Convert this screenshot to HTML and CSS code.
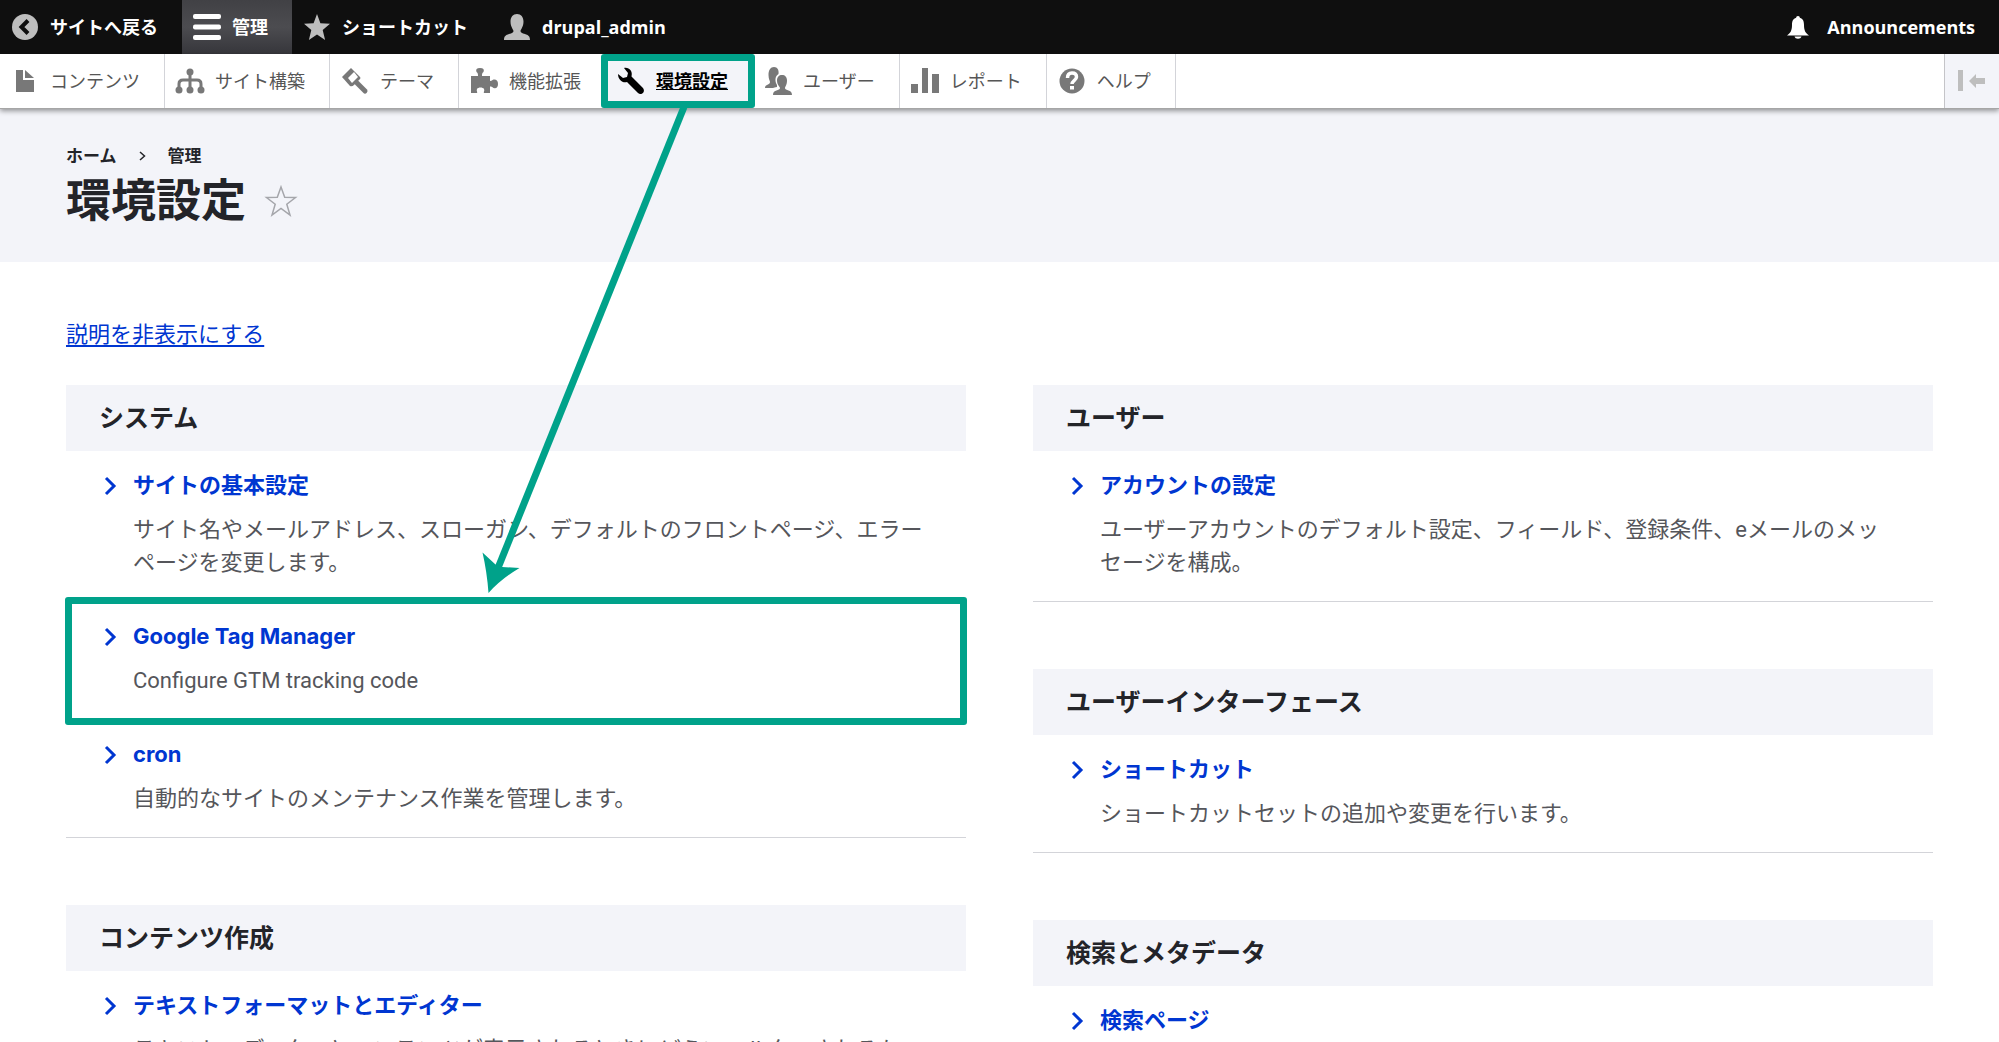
FILE: index.html
```html
<!DOCTYPE html>
<html lang="ja">
<head>
<meta charset="utf-8">
<meta name="viewport" content="width=device-width, initial-scale=1">
<title>環境設定 | Drupal</title>
<link rel="stylesheet" href="styles.css">
</head>
<body>
<nav class="toolbar-bar" aria-label="ツールバー">
  <a class="bar-item" href="#"><svg class="icon" viewBox="0 0 26 26"><circle cx="13" cy="13" r="13" fill="#bebebe"/><path d="M16 6.500l-6.500 6.500 6.500 6.500" fill="none" stroke="#0f0f0f" stroke-width="4"/></svg>サイトへ戻る</a>
  <a class="bar-item bar-item-active" href="#"><svg class="icon" viewBox="0 0 26 26" fill="#fff"><rect x="-1" y="0" width="28" height="5" rx="2"/><rect x="-1" y="10.500" width="28" height="5" rx="2"/><rect x="-1" y="21" width="28" height="5" rx="2"/></svg>管理</a>
  <a class="bar-item" href="#"><svg class="icon" viewBox="0 0 26 26" fill="#bebebe"><path d="M13 0l3.400 9.200 9.600.6-7.300 6.200 2.400 10L13 20.400 4.900 26l2.400-10L0 9.800l9.600-.6z"/></svg>ショートカット</a>
  <a class="bar-item" href="#"><svg class="icon" viewBox="0 0 26 26" fill="#bebebe"><path d="M0 26c0-4 2-5 5-6 3-.8 4.500-1.500 4.500-3 0-1.200-3-4-3-9.500C6.500 3 9 0 13 0s6.500 3 6.500 7.500c0 5.500-3 8.300-3 9.500 0 1.500 1.500 2.200 4.500 3 3 1 5 2 5 6z"/></svg>drupal_admin</a>
  <a class="bar-item bar-item-end" href="#"><svg class="icon" viewBox="0 0 26 26" fill="#fff"><path d="M13 2c1.200 0 1.800.8 1.800 1.700 3.200.9 4.200 3.600 4.200 7.300 0 5.500 1.500 8 5 10.500H2C5.500 19 7 16.500 7 11c0-3.700 1-6.400 4.200-7.300C11.200 2.800 11.800 2 13 2zM9.500 22.500h7c-.5 1.500-1.800 2.200-3.500 2.200s-3-.7-3.500-2.200z"/></svg>Announcements</a>
</nav>
<nav class="tray" aria-label="管理メニュー">
  <a class="tray-item" href="#"><svg class="icon" viewBox="0 0 26 26" fill="#787878"><path d="M4 2h7v10h11v12H4zM13 2l9 8h-9z"/></svg>コンテンツ</a>
  <a class="tray-item" href="#"><svg class="icon" viewBox="0 0 26 26" fill="#787878"><circle cx="13" cy="4" r="3.500"/><circle cx="2" cy="22" r="3.500"/><circle cx="13" cy="22" r="3.500"/><circle cx="24" cy="22" r="3.500"/><path d="M13 5v16M2 21v-5q0-4 4-4h14q4 0 4 4v5" fill="none" stroke="#787878" stroke-width="3"/></svg>サイト構築</a>
  <a class="tray-item" href="#"><svg class="icon" viewBox="0 0 26 26"><path d="M9 0L0 9l8 9q2 1 4-1l6-6q1-1 0-2z" fill="#787878"/><path d="M12 4l-6 6 4 5 6-6z" fill="#fff"/><path d="M15 15l8 8" stroke="#787878" stroke-width="5" stroke-linecap="round"/></svg>テーマ</a>
  <a class="tray-item" href="#"><svg class="icon" viewBox="0 0 26 26" fill="#787878"><path d="M0 8h7c0-2 0-3-1.500-4Q4 0 9 0t3.500 4C11 5 11 6 11 8h8v5c2 0 2-1 3.500-1.500Q27 11 27 16t-4.500 4C21 19 21 18.500 19 18.500V25h-6c-1-1 1-2 0-4-1-2-6-2-7 0-1 2 1 3 0 4H0z"/></svg>機能拡張</a>
  <a class="tray-item tray-item-active" href="#"><svg class="icon" viewBox="0 0 26 26"><path d="M6 0c5-1 9 3 7.500 8.500L25 20c3 4-2 8-5 5L9 14C5 15.500 0 12 0 6l5 4 4-1 1-4z" fill="#000"/></svg>環境設定</a>
  <a class="tray-item" href="#"><svg class="icon" viewBox="0 0 26 26" fill="#787878"><path d="M0 20c0-4 5-3 5-6 0-1-1.500-3-1.500-7C3.500 2 5.500-1 9-1s5 3 4.500 7C10 8 9.500 13 12 17v2c-2 .5-3 .5-4 1z"/><path d="M8 27c0-6 7-4 7-7 0-1-3-3-3-7.500C12 9 14 7 17 7s5 2 5 5.500c0 4.500-2 6.500-2 7.500 0 3 7 1 7 7z"/></svg>ユーザー</a>
  <a class="tray-item" href="#"><svg class="icon" viewBox="0 0 26 26" fill="#787878"><path d="M-1 16h7v9h-7zM10 0h6v25h-6zM20 6h7v19h-7z"/></svg>レポート</a>
  <a class="tray-item" href="#"><svg class="icon" viewBox="0 0 26 26"><circle cx="13" cy="13" r="12.500" fill="#787878"/><path d="M8.500 10q0-5 4.500-5t4.500 4c0 3-4.500 4-4.500 7" fill="none" stroke="#fff" stroke-width="3.500"/><path d="M11 18h4v3.500h-4z" fill="#fff"/></svg>ヘルプ</a>
  <button class="tray-toggle" type="button" aria-label="縦向き"><svg width="28" height="22" viewBox="0 0 28 22" fill="#bebebe"><path d="M0 0h5v21H0zM11 11l7-7v4h9v6h-9v4z"/></svg></button>
</nav>
<header class="page-header">
  <nav class="breadcrumb" aria-label="パンくず">
    <a href="#">ホーム</a>
    <svg width="7" height="10" viewBox="0 0 7 10"><path d="M1 1l4.500 4L1 9" fill="none" stroke="#232429" stroke-width="1.500"/></svg>
    <a href="#">管理</a>
  </nav>
  <div class="title-row">
    <h1>環境設定</h1>
    <button class="star" type="button" aria-label="ショートカットに追加"><svg width="34" height="34" viewBox="0 0 34 34"><path d="M17 3l3.700 10.300L31.500 13.500l-8.700 6.700L26 31l-9-6.500L8 31l3.200-10.800-8.700-6.700 10.800-.2z" fill="none" stroke="#a5a6ab" stroke-width="1.500"/></svg></button>
  </div>
</header>
<main class="content">
  <a class="compact-link" href="#">説明を非表示にする</a>
  <div class="columns">
    <div class="column">
      <section class="panel">
        <h2>システム</h2>
        <dl>
          <div class="entry"><dt><svg class="chevron" viewBox="0 0 12 20"><path d="M2 2l8 8-8 8"/></svg><a href="#">サイトの基本設定</a></dt><dd>サイト名やメールアドレス、スローガン、デフォルトのフロントページ、エラーページを変更します。</dd></div>
          <div class="entry entry-marked"><dt><svg class="chevron" viewBox="0 0 12 20"><path d="M2 2l8 8-8 8"/></svg><a href="#">Google Tag Manager</a></dt><dd>Configure GTM tracking code</dd></div>
          <div class="entry"><dt><svg class="chevron" viewBox="0 0 12 20"><path d="M2 2l8 8-8 8"/></svg><a href="#">cron</a></dt><dd>自動的なサイトのメンテナンス作業を管理します。</dd></div>
        </dl>
      </section>
      <section class="panel">
        <h2>コンテンツ作成</h2>
        <dl>
          <div class="entry"><dt><svg class="chevron" viewBox="0 0 12 20"><path d="M2 2l8 8-8 8"/></svg><a href="#">テキストフォーマットとエディター</a></dt><dd>テキストエディターとコンテンツが表示されるときにどうフィルターされるか、設定します。</dd></div>
        </dl>
      </section>
    </div>
    <div class="column">
      <section class="panel">
        <h2>ユーザー</h2>
        <dl>
          <div class="entry"><dt><svg class="chevron" viewBox="0 0 12 20"><path d="M2 2l8 8-8 8"/></svg><a href="#">アカウントの設定</a></dt><dd>ユーザーアカウントのデフォルト設定、フィールド、登録条件、eメールのメッセージを構成。</dd></div>
        </dl>
      </section>
      <section class="panel">
        <h2>ユーザーインターフェース</h2>
        <dl>
          <div class="entry"><dt><svg class="chevron" viewBox="0 0 12 20"><path d="M2 2l8 8-8 8"/></svg><a href="#">ショートカット</a></dt><dd>ショートカットセットの追加や変更を行います。</dd></div>
        </dl>
      </section>
      <section class="panel">
        <h2>検索とメタデータ</h2>
        <dl>
          <div class="entry"><dt><svg class="chevron" viewBox="0 0 12 20"><path d="M2 2l8 8-8 8"/></svg><a href="#">検索ページ</a></dt></div>
        </dl>
      </section>
    </div>
  </div>
</main>
<svg class="callout-arrow" width="720" height="600" viewBox="0 0 720 600" aria-hidden="true"><path d="M684 107L498 568" stroke="#00a28a" stroke-width="7"/><path d="M488.500 593Q487 572 482.500 552.500L495.500 564.500 502 567 519.500 568Q501 579 488.500 593z" fill="#00a28a"/></svg>
</body>
</html>
```
FILE: styles.css
```css
* {
  box-sizing: border-box;
}

body {
  position: relative;
  margin: 0;
  background: #fff;
  color: #232429;
  font-family: Inter, "Noto Sans CJK JP", sans-serif;
  font-size: 22px;
  line-height: 33px;
}

a {
  color: #0036d1;
}

button {
  padding: 0;
  border: 0;
  background: none;
}

svg {
  display: block;
  overflow: visible;
}

/* Toolbar */
.toolbar-bar,
.tray {
  display: flex;
  font-family: "Open Sans", "Noto Sans CJK JP", sans-serif;
  font-size: 18px;
}

.toolbar-bar {
  height: 54px;
  background: #0f0f0f;
}

.bar-item,
.tray-item {
  display: flex;
  align-items: center;
  gap: 12px;
  padding: 0 24px 0 12px;
  white-space: nowrap;
  text-decoration: none;
}

.bar-item {
  color: #fff;
  font-weight: 700;
}

.bar-item-active {
  background: linear-gradient(#414145, #4c4c50 50%, #36363b);
}

.bar-item-end {
  gap: 16px;
  margin-left: auto;
}

.icon {
  flex: none;
  width: 26px;
  height: 26px;
}

.tray {
  position: relative;
  height: 55px;
  border-bottom: 1px solid #a6a6a6;
  background: #fff;
  box-shadow: 0 2px 5px rgba(0, 0, 0, 0.4);
}

.tray-item {
  position: relative;
  border-right: 1px solid #d3d4d9;
  color: #565656;
}

.tray-item-active {
  background: #f3f4f9;
  color: #000;
  font-weight: 700;
  text-decoration: underline;
}

.tray-item-active::after {
  position: absolute;
  z-index: 1;
  inset: 0 -3px 0 -5px;
  border: 7px solid #00a28a;
  border-radius: 3px;
  content: "";
}

.tray-toggle {
  display: flex;
  align-items: center;
  justify-content: center;
  width: 55px;
  margin-left: auto;
  border-left: 1px solid #c4c4c8;
  background: #f3f4f9;
}

/* Page header */
.page-header {
  padding: 35px 66px 31px;
  background: #f3f4f9;
}

.breadcrumb {
  display: flex;
  align-items: center;
  gap: 22px;
  font-size: 17px;
  font-weight: 700;
  line-height: 24px;
}

.breadcrumb a {
  color: inherit;
  text-decoration: none;
}

.title-row {
  display: flex;
  align-items: center;
  gap: 18px;
  padding-top: 2px;
}

h1 {
  margin: 0;
  font-size: 45px;
  line-height: 61px;
}

/* Panels */
.content {
  padding: 56px 66px 0;
}

.compact-link {
  text-underline-offset: 3px;
}

.columns {
  display: grid;
  grid-template-columns: 1fr 1fr;
  gap: 67px;
  padding-top: 34px;
}

.column {
  display: flex;
  flex-direction: column;
  gap: 67px;
}

h2 {
  margin: 0;
  padding: 17px 33px 16px;
  background: #f3f4f9;
  font-size: 25px;
  line-height: 33px;
}

dl {
  margin: 0;
  border-bottom: 1px solid #d3d4d9;
}

.entry {
  position: relative;
  padding: 18px 34px 23px 38px;
}

.entry:last-child {
  padding-bottom: 22px;
}

.entry-marked::after {
  position: absolute;
  inset: -5px -1px;
  border: 7px solid #00a28a;
  border-radius: 3px;
  content: "";
  pointer-events: none;
}

dt {
  display: flex;
  align-items: center;
  gap: 17px;
  font-weight: 700;
}

dt a {
  text-decoration: none;
}

dd {
  margin: 11px 0 0 29px;
  color: #55565b;
  font-family: Roboto, "Noto Sans CJK JP", sans-serif;
}

.chevron {
  width: 12px;
  height: 20px;
  fill: none;
  stroke: #0036d1;
  stroke-width: 3;
}

.callout-arrow {
  position: absolute;
  top: 0;
  left: 0;
  fill: none;
  pointer-events: none;
}
```
